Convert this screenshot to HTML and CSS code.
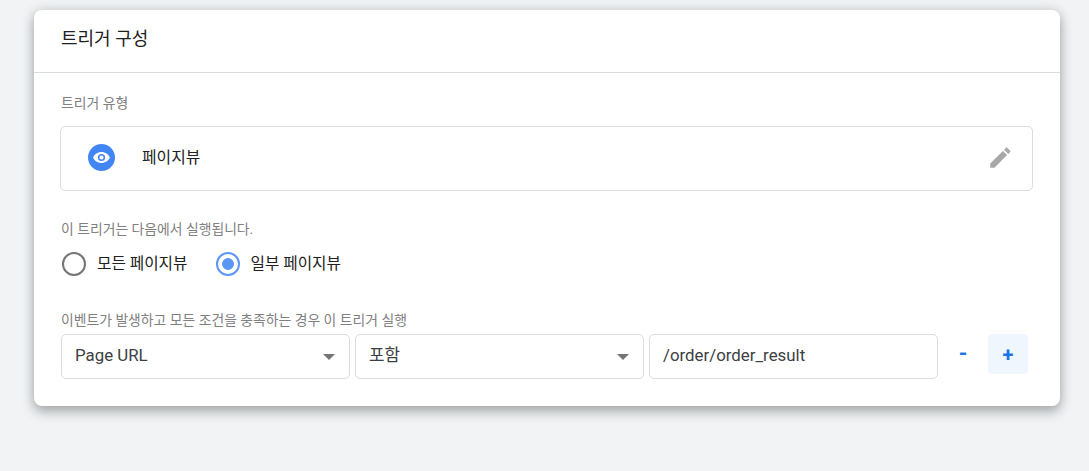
FILE: index.html
```html
<!DOCTYPE html>
<html lang="ko">
<head>
<meta charset="utf-8">
<title>트리거 구성</title>
<link rel="stylesheet" href="styles.css">
</head>
<body>
<main class="card">
  <header class="card-head">트리거 구성</header>
  <div class="card-body">
    <div class="label label-type">트리거 유형</div>
    <div class="type-box">
      <span class="type-icon">
        <svg width="27" height="27" viewBox="0 0 27 27"><circle cx="13.5" cy="13.5" r="13.500" fill="#4285f4"/><path fill="#fff" fill-rule="evenodd" d="M13.500 8c-3.800 0-7 2.300-8.400 5.500 1.400 3.200 4.600 5.500 8.400 5.500s7-2.300 8.400-5.500C20.500 10.300 17.300 8 13.500 8zm0 9.100a3.600 3.600 0 1 1 0-7.200 3.600 3.600 0 0 1 0 7.200zm0-5.700a2.100 2.100 0 1 0 0 4.200 2.100 2.100 0 0 0 0-4.200z"/></svg>
      </span>
      <span class="type-name">페이지뷰</span>
      <svg class="edit-icon" width="24" height="24" viewBox="-1.5 -1.5 27 27"><path fill="#a8a8a8" d="M1 23v-4.700L15.300 4l4.700 4.700L5.700 23H1zM21.300 7.400l-4.700-4.700 2-2c.5-.5 1.300-.5 1.800 0l2.900 2.900c.5.500.5 1.300 0 1.800l-2 2z"/></svg>
    </div>
    <div class="label label-run">이 트리거는 다음에서 실행됩니다.</div>
    <div class="radios">
      <label class="radio"><span class="radio-mark"></span>모든 페이지뷰</label>
      <label class="radio"><span class="radio-mark radio-on"></span>일부 페이지뷰</label>
    </div>
    <div class="label label-cond">이벤트가 발생하고 모든 조건을 충족하는 경우 이 트리거 실행</div>
    <div class="cond-row">
      <div class="field select">Page URL<span class="caret"></span></div>
      <div class="field select">포함<span class="caret"></span></div>
      <div class="field">/order/order_result</div>
      <span class="btn-minus">-</span>
      <span class="btn-plus">+</span>
    </div>
  </div>
</main>
</body>
</html>
```
FILE: styles.css
```css
* { box-sizing: border-box; }
html, body { margin: 0; height: 100%; }
body {
  background: #f1f3f5;
  font-family: Roboto, "Noto Sans CJK KR", sans-serif;
  padding: 10px 29px 0 34px;
  overflow: hidden;
  color: #212121;
}
.card {
  height: 396px;
  background: #fff;
  border-radius: 8px;
  box-shadow: 0 6px 12px rgba(60,64,67,.35), 0 0 12px rgba(60,64,67,.18);
}
.card-head {
  height: 63px;
  padding: 16px 27px 0;
  font-size: 18px;
  line-height: 26px;
  border-bottom: 1px solid #dadce0;
}
.card-body { padding: 0 27px 0 26px; }
.label { font-size: 13.85px; line-height: 18px; color: #808080; }
.label-type { padding-top: 21px; height: 53px; padding-left: 1px; }
.type-box {
  display: flex;
  align-items: center;
  height: 65px;
  border: 1px solid #dadce0;
  border-radius: 5px;
  padding: 0 20px 2px 27px;
}
.type-icon { display: flex; width: 27px; height: 27px; }
.type-name { margin-left: 27px; font-size: 15.85px; line-height: 20px; flex: 1; }
.edit-icon { display: block; }
.label-run { margin-top: 29px; padding-left: 1px; }
.radios { display: flex; gap: 28px; margin-top: 14px; padding-left: 2px; }
.radio { display: flex; align-items: center; gap: 11px; font-size: 15.7px; line-height: 24px; }
.radio-mark {
  width: 24px; height: 24px;
  border: 2px solid #757575;
  border-radius: 50%;
  display: block;
}
.radio-on {
  border-color: #5c97f7;
  background: radial-gradient(circle, #5c97f7 0 5.500px, #fff 6.200px);
}
.label-cond { margin-top: 35px; padding-left: 1px; }
.cond-row { display: flex; align-items: flex-start; margin-top: 5px; padding-left: 1px; }
.field {
  width: 289px;
  height: 45px;
  margin-right: 5px;
  border: 1px solid #dadce0;
  border-radius: 5px;
  padding: 0 14px 4px 13px;
  font-size: 16.85px;
  line-height: 40px;
  color: #3c4043;
  display: flex;
  align-items: center;
  justify-content: space-between;
}
.caret {
  width: 0; height: 0;
  margin-top: 5px;
  border-left: 6px solid transparent;
  border-right: 6px solid transparent;
  border-top: 6px solid #757575;
}
.btn-minus, .btn-plus {
  display: flex; align-items: center; justify-content: center;
  font-weight: 700; color: #1a73e8;
}
.btn-minus { width: 40px; height: 40px; margin-right: 5px; font-size: 22px; padding-bottom: 1px; }
.btn-plus { width: 40px; height: 40px; font-size: 20px; padding-top: 2px; background: #f0f6fd; border-radius: 4px; }
```
